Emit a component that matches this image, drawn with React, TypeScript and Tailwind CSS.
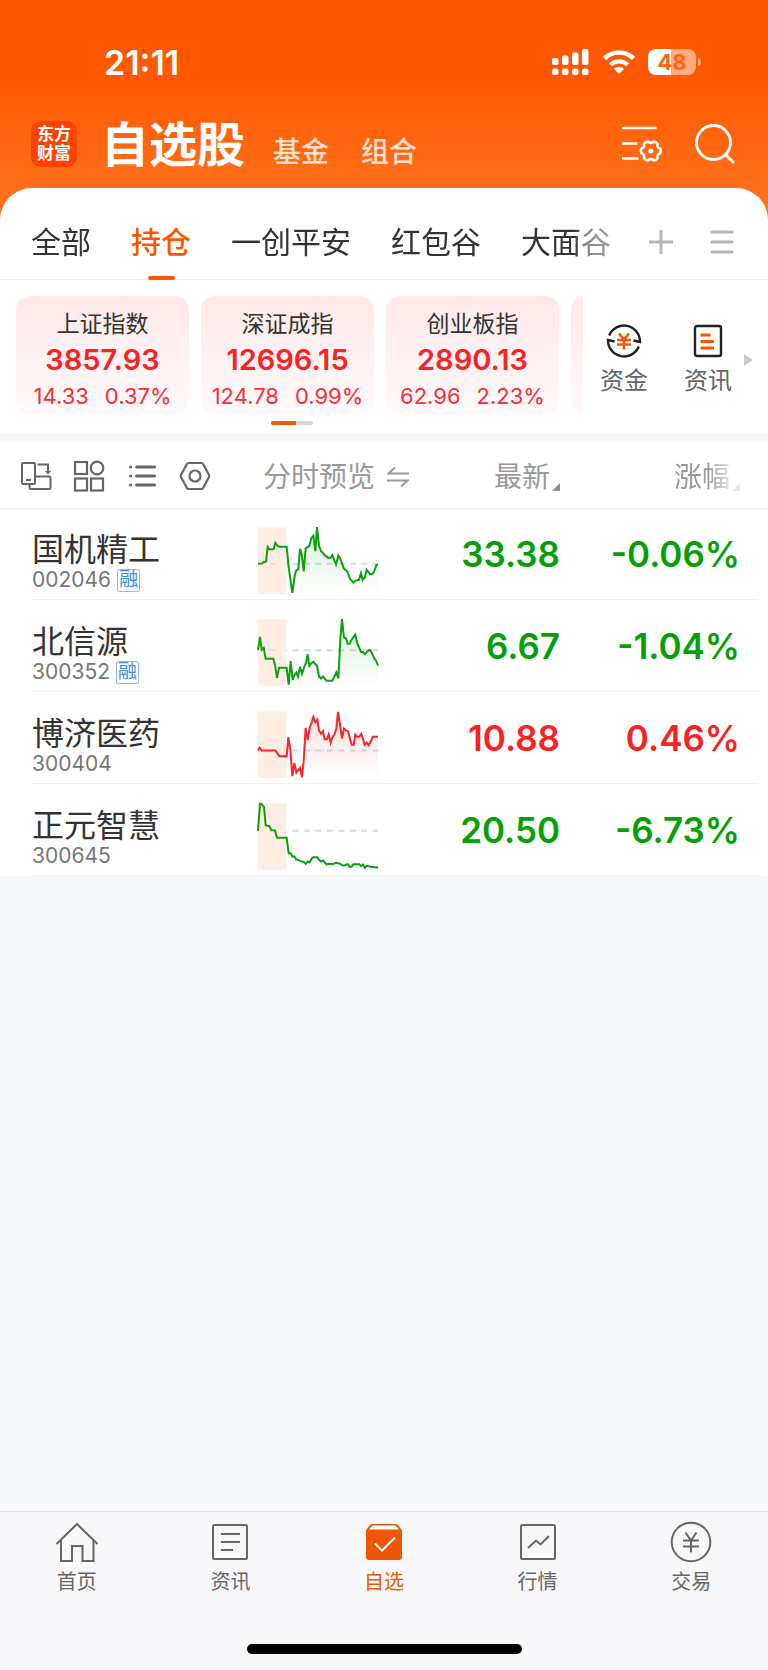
import React, { useState } from 'react';
import clsx from 'clsx';

const tabs = ['全部', '持仓', '一创平安', '红包谷', '大面谷'];

const indexes = [
  { name: '上证指数', value: '3857.93', change: '14.33', percent: '0.37%' },
  { name: '深证成指', value: '12696.15', change: '124.78', percent: '0.99%' },
  { name: '创业板指', value: '2890.13', change: '62.96', percent: '2.23%' },
];

// points are drawn on a 360x200 canvas, base is the previous close
const stocks = [
  {
    name: '国机精工', code: '002046', margin: true, price: '33.38', percent: '-0.06%', up: false, base: 110,
    points: '0,110 12,109 16,105 24,103 29,60 33,66 47,66 52,47 58,55 64,59 86,59 92,120 103,197 110,145 115,130 121,126 126,65 131,80 137,132 143,63 149,60 154,56 160,33 166,26 172,72 177,0 183,55 189,72 194,76 200,84 211,92 218,91 223,84 234,112 241,85 247,95 257,123 268,133 276,155 286,166 292,161 303,158 309,138 314,158 321,150 326,128 336,141 344,140 349,132 355,114 360,113',
  },
  {
    name: '北信源', code: '300352', margin: true, price: '6.67', percent: '-1.04%', up: false, base: 93,
    points: '0,93 6,53 11,92 17,86 23,119 46,119 51,138 57,176 63,146 86,146 92,197 98,126 104,182 109,168 115,160 120,172 126,143 132,164 138,145 144,130 149,105 154,140 160,132 166,128 177,140 183,172 189,178 195,172 206,185 223,185 235,160 241,178 247,60 252,0 258,55 264,57 269,74 275,74 281,61 292,47 298,73 309,98 315,99 321,105 332,93 338,94 348,116 355,126 360,139',
  },
  {
    name: '博济医药', code: '300404', margin: false, price: '10.88', percent: '0.46%', up: true, base: 118,
    points: '0,118 5,110 11,118 52,118 64,135 86,135 91,78 97,115 103,195 109,155 115,184 126,170 132,198 137,150 143,50 149,87 155,50 161,34 166,17 172,33 178,25 183,58 189,68 195,60 200,84 207,84 212,70 218,94 223,78 229,70 235,52 240,2 246,40 252,82 258,52 264,58 270,60 281,101 287,101 292,70 298,77 304,76 310,68 320,101 326,94 332,102 338,92 344,77 360,77',
  },
  {
    name: '正元智慧', code: '300645', margin: false, price: '20.50', percent: '-6.73%', up: false, base: 83,
    points: '0,83 6,2 10,2 18,11 23,66 34,69 40,81 51,82 57,104 86,104 92,150 98,150 103,160 109,160 115,169 126,173 138,177 143,182 149,175 155,178 161,166 166,162 178,162 183,170 189,175 195,172 206,184 212,182 223,183 235,179 247,182 252,186 258,187 269,183 275,191 281,191 286,183 304,183 309,189 315,184 321,194 326,188 338,191 355,193 360,192',
  },
];

function StatusIcons() {
  return (
    <div className="flex items-center text-white">
      <svg width="38" height="26" viewBox="0 0 38 26" fill="currentColor">
        <rect x="0" y="9" width="6.500" height="7" rx="2" />
        <rect x="10" y="6.500" width="6.500" height="9.500" rx="2" />
        <rect x="20" y="3.500" width="6.500" height="12.500" rx="2" />
        <rect x="30" y="0" width="6.500" height="16" rx="2" />
        <rect x="0" y="19.500" width="6.500" height="6.500" rx="2" />
        <rect x="10" y="19.500" width="6.500" height="6.500" rx="2" />
        <rect x="20" y="19.500" width="6.500" height="6.500" rx="2" />
        <rect x="30" y="19.500" width="6.500" height="6.500" rx="2" />
      </svg>
      <svg className="ml-3" width="34" height="26" viewBox="0 0 34 26" fill="none" stroke="currentColor" strokeWidth="4.600">
        <path d="M2.500 9.500a20.500 20.500 0 0 1 29 0" />
        <path d="M8.300 15.800a12.500 12.500 0 0 1 17.400 0" strokeWidth="4.200" />
        <path d="M17 25l-5.200-5.200a7.500 7.500 0 0 1 10.400 0z" fill="currentColor" stroke="none" />
      </svg>
      <div className="ml-3 flex h-[26px] w-12 items-center justify-center rounded-[8px] bg-[linear-gradient(90deg,#fff_48%,#ffab80_48%)] font-[Inter] text-[22px] font-bold text-[#ff6410]">
        48
      </div>
      <svg className="ml-0.5" width="3" height="8" viewBox="0 0 3 8">
        <path d="M0 0c4 1 4 7 0 8z" fill="#ffab80" />
      </svg>
    </div>
  );
}

function Sparkline({ id, points, base, up }: { id: string; points: string; base: number; up: boolean }) {
  const color = up ? '#f8252a' : '#0aa00f';
  return (
    <svg width="120" height="67" viewBox="0 0 360 200" className="overflow-visible">
      <defs>
        <linearGradient id={`fill-${id}`} x1="0" y1="0" x2="0" y2="1">
          <stop offset="0" stopColor={color} stopOpacity="0.16" />
          <stop offset="1" stopColor={color} stopOpacity="0" />
        </linearGradient>
        <clipPath id={`clip-${id}`}>
          <rect x="84" y="0" width="276" height="200" />
        </clipPath>
      </defs>
      <line x1="0" y1={base} x2="360" y2={base} stroke="#d9d9e3" strokeWidth="6" strokeDasharray="18 16.400" />
      <rect width="84" height="200" fill="#ffede4" />
      <line x1="34" y1={base} x2="52" y2={base} stroke="#e6d9da" strokeWidth="5" />
      <polygon points={`0,200 ${points} 360,200`} fill={`url(#fill-${id})`} clipPath={`url(#clip-${id})`} />
      <polyline points={points} fill="none" stroke={color} strokeWidth="6" strokeLinejoin="miter" />
    </svg>
  );
}

const navItems = [
  {
    label: '首页',
    icon: (
      <g>
        <path d="M1.500 23L22 3l20.500 20" />
        <path d="M6 19.500V40h11V25h10.500v15h11V19.500" />
      </g>
    ),
  },
  {
    label: '资讯',
    icon: (
      <g>
        <rect x="5" y="4" width="34" height="34" rx="1.500" />
        <path d="M13 13h19M13 21h19M13 29h12" />
      </g>
    ),
  },
  {
    label: '自选',
    icon: (
      <g>
        <path d="M4 9l5-6h26l5 6v27a3 3 0 0 1-3 3H7a3 3 0 0 1-3-3z" fill="#ee5706" stroke="none" />
        <path d="M10.500 4.500h23l3.500 4H7z" fill="#fff" stroke="none" />
        <path d="M13 22.500l7 7 13-13" stroke="#fff" />
      </g>
    ),
  },
  {
    label: '行情',
    icon: (
      <g>
        <rect x="5" y="4" width="34" height="34" rx="1.500" />
        <path d="M12 27l8-7.500 4.500 4L33 15" />
      </g>
    ),
  },
  {
    label: '交易',
    icon: (
      <g>
        <circle cx="22" cy="21" r="19.300" />
        <path d="M16.500 11.500l5.500 8 5.500-8M14 19.500h16M14 25.500h16M22 19.500v12" />
      </g>
    ),
  },
];

function App() {
  const [tab, setTab] = useState('持仓');
  const [page, setPage] = useState('自选');

  return (
    <div className="flex min-h-screen flex-col bg-[#f7f8fa] font-['Inter','Noto_Sans_CJK_SC',sans-serif] text-[#333]">
      {/* Header */}
      <header className="bg-[linear-gradient(#ff5800_80px,#ff701c_188px)]">
        <div className="flex h-[124px] items-center justify-between pr-[67px] pl-[104px]">
          <span className="text-[34px] font-semibold text-white">21:11</span>
          <StatusIcons />
        </div>
        <div className="-mt-4 flex h-20 items-center pr-8 pl-[31px] text-white">
          <div className="mt-[-8px] grid size-[46px] shrink-0 place-content-center rounded-[10px] bg-[#ff4200] text-center text-[17px] leading-[19px] font-bold">
            <span>东方</span>
            <span>财富</span>
          </div>
          <nav className="ml-6 flex items-baseline leading-[64px]">
            <button className="text-[48px] font-bold">自选股</button>
            <button className="ml-7 text-[28px] font-medium text-white/80">基金</button>
            <button className="ml-8 text-[28px] font-medium text-white/80">组合</button>
          </nav>
          <div className="mt-[-8px] ml-auto flex items-center gap-[31px]">
            <button aria-label="自选设置">
              <svg width="42" height="40" viewBox="0 0 42 40" fill="none" stroke="currentColor" strokeWidth="2.600">
                <path d="M1 4h34.500M1 19.500h15.500M1 34.500h16.500" />
                <path
                  d="M9.500-2.200Q10.600 0 9.500 2.200Q6 3.500 6.700 7.200Q5.300 9.200 2.900 9.400Q0 7-2.900 9.400Q-5.300 9.200-6.700 7.200Q-6 3.500-9.500 2.200Q-10.600 0-9.500-2.200Q-6-3.500-6.700-7.200Q-5.300-9.200-2.900-9.400Q0-7 2.900-9.400Q5.300-9.200 6.700-7.200Q6-3.500 9.500-2.200z"
                  strokeLinejoin="round"
                  transform="translate(29.800 27)"
                />
                <circle cx="29.800" cy="27" r="2.500" fill="currentColor" stroke="none" />
              </svg>
            </button>
            <button aria-label="搜索">
              <svg width="42" height="42" viewBox="0 0 42 42" fill="none" stroke="currentColor" strokeWidth="2.800">
                <circle cx="19.500" cy="19.500" r="17" />
                <path d="M31.500 31.500l8.500 8.500" />
              </svg>
            </button>
          </div>
        </div>
      </header>

      {/* Group tabs */}
      <div className="bg-[#ff701c]">
        <div className="flex h-[92px] rounded-t-[32px] bg-white pr-[34px] pl-[31px] shadow-[inset_0_-1px_0_#ececec]">
          <nav className="flex min-w-0 flex-1 gap-10 overflow-hidden [mask-image:linear-gradient(90deg,#000_calc(100%-38px),#0009_calc(100%-28px),#0007)]">
            {tabs.map(name => (
              <button
                key={name}
                onClick={() => setTab(name)}
                className={clsx(
                  'flex shrink-0 flex-col items-center justify-end text-[30px] leading-10',
                  tab === name ? 'font-medium text-[#ff5500]' : 'text-[#333]'
                )}
              >
                {name}
                <span className={clsx('mt-3.5 h-1 w-[27px] rounded-sm', tab === name && 'bg-[#ff5500]')} />
              </button>
            ))}
          </nav>
          <div className="flex items-center gap-9 pt-4 pl-9 text-[#b5b5b5]">
            <button aria-label="添加分组">
              <svg width="26" height="26" viewBox="0 0 26 26" stroke="currentColor" strokeWidth="3">
                <path d="M13 1v24M1 13h24" />
              </svg>
            </button>
            <button aria-label="管理分组">
              <svg width="24" height="26" viewBox="0 0 24 26" stroke="currentColor" strokeWidth="3" strokeLinecap="round">
                <path d="M2 3h20M2 13h20M2 23h20" />
              </svg>
            </button>
          </div>
        </div>
      </div>

      {/* Market indexes */}
      <section className="flex bg-white pt-4 pb-2">
        <div className="flex min-w-0 flex-1 flex-col items-center">
          <div className="flex w-full gap-3 overflow-hidden pl-4">
            {indexes.map(item => (
              <div
                key={item.name}
                className="flex h-[118px] w-[173px] shrink-0 flex-col items-center rounded-[14px] bg-linear-to-b from-[#fee8e9] to-[#fffafa] pt-3"
              >
                <span className="text-[23px] leading-8">{item.name}</span>
                <span className="mt-1 text-[29px] leading-8 font-semibold text-[#fa2222]">{item.value}</span>
                <span className="mt-1 flex gap-4 text-[22px] leading-8 text-[#fa2f35]">
                  <span>{item.change}</span>
                  <span>{item.percent}</span>
                </span>
              </div>
            ))}
            <div className="h-[118px] w-[173px] shrink-0 rounded-[14px] bg-linear-to-b from-[#fee8e9] to-[#fffafa]" />
          </div>
          <div className="mt-[7px] flex h-1 w-[42px] overflow-hidden rounded-sm bg-[#d5d5de]">
            <div className="w-[25px] bg-[#f25a05]" />
          </div>
        </div>
        <div className="flex w-[185px] items-center pb-0.5 pl-[17px] text-[24px] leading-8 text-[#666]">
          <button className="flex flex-col items-center gap-1.5">
            <svg width="36" height="36" viewBox="0 0 36 36" fill="none" stroke="#222" strokeWidth="2.400">
              <path d="M3.200 12.500A16 16 0 0 1 34 19l-6.500-1.500M32.800 23.500A16 16 0 0 1 2 17l6.500 1.500" />
              <path d="M13 10.500l5 6 5-6M11 17h14M11 21.500h14M18 16v10.500" stroke="#ff5500" strokeWidth="2.600" />
            </svg>
            资金
          </button>
          <button className="ml-9 flex flex-col items-center gap-1.5">
            <svg width="36" height="36" viewBox="0 0 36 36" fill="none" stroke="#222" strokeWidth="2.400">
              <rect x="5" y="3" width="26" height="30" rx="2" />
              <path d="M10.500 12h10M10.500 18.500h13.500M10.500 25h13.500" stroke="#ff5500" strokeWidth="2.800" />
            </svg>
            资讯
          </button>
          <svg className="ml-3" width="9" height="12" viewBox="0 0 9 12">
            <path d="M0 0l9 6-9 6z" fill="#ccc" />
          </svg>
        </div>
      </section>

      {/* Stock list */}
      <main className="grow pt-[9px]">
        <table className="w-full table-fixed bg-white">
          <colgroup>
            <col className="w-[258px]" />
            <col />
            <col className="w-[140px]" />
            <col className="w-[208px]" />
          </colgroup>
          <thead className="text-[28px] leading-8 text-[#999]">
            <tr className="h-[66px] border-b border-[#f0f0f0]">
              <th className="pt-0.5 pl-5 font-normal">
                <div className="flex items-center gap-[21px] text-[#666]">
                  <button aria-label="横屏">
                    <svg width="32" height="32" viewBox="0 0 32 32" fill="none" stroke="currentColor" strokeWidth="2">
                      <rect x="2" y="3" width="13" height="21" rx="1" />
                      <path d="M6 20h5M17.500 4.500H28V13M9.500 24v3.500q0 1.500 1.500 1.500h18q1.500 0 1.500-1.500V18q0-1.500-1.500-1.500H15" />
                      <path d="M25 11h6l-3 3.500z" fill="currentColor" stroke="none" />
                    </svg>
                  </button>
                  <button aria-label="宫格">
                    <svg width="32" height="32" viewBox="0 0 32 32" fill="none" stroke="currentColor" strokeWidth="2.200">
                      <rect x="2" y="2" width="12" height="12" />
                      <circle cx="24" cy="8" r="6.300" />
                      <rect x="2" y="18.500" width="12" height="12" />
                      <rect x="18" y="18.500" width="12" height="12" />
                    </svg>
                  </button>
                  <button aria-label="列表">
                    <svg width="32" height="32" viewBox="0 0 32 32" fill="none" stroke="currentColor" strokeWidth="3" strokeLinecap="round">
                      <path d="M10.500 7h18M10.500 16h18M10.500 25h18M4.500 7h.1M4.500 16h.1M4.500 25h.1" />
                    </svg>
                  </button>
                  <button aria-label="设置">
                    <svg width="32" height="32" viewBox="0 0 32 32" fill="none" stroke="currentColor" strokeWidth="2.200">
                      <path d="M9.500 3h13q1 0 1.600 1l5.900 11q.5 1 0 2l-5.900 11q-.6 1-1.600 1h-13q-1 0-1.600-1L2 17q-.5-1 0-2L7.900 4q.6-1 1.600-1z" />
                      <circle cx="16" cy="16" r="5.500" />
                    </svg>
                  </button>
                </div>
              </th>
              <th className="pt-1 pl-[5px] font-normal">
                <button className="flex items-center gap-3 whitespace-nowrap">
                  分时预览
                  <svg width="22" height="22" viewBox="0 0 22 22" fill="none" stroke="currentColor" strokeWidth="2">
                    <path d="M8 1.500L1.500 7.500H22M14 20.500l6.500-6H0" />
                  </svg>
                </button>
              </th>
              <th className="pt-1 font-normal">
                <button className="ml-auto flex items-end gap-0.5">
                  最新
                  <svg className="mb-0.5" width="8" height="8" viewBox="0 0 8 8">
                    <path d="M8 0v8H0z" fill="#8e8e96" />
                  </svg>
                </button>
              </th>
              <th className="pt-1 pr-7 font-normal">
                <button className="ml-auto flex items-end gap-0.5 [mask-image:linear-gradient(90deg,#000_52%,#0003_88%)]">
                  涨幅
                  <svg className="mb-0.5" width="8" height="8" viewBox="0 0 8 8">
                    <path d="M8 0v8H0z" fill="#8e8e96" />
                  </svg>
                </button>
              </th>
            </tr>
          </thead>
          <tbody>
            {stocks.map(stock => (
              <tr
                key={stock.code}
                className="h-[92px] bg-[linear-gradient(#f1f1f3,#f1f1f3)] bg-[length:calc(100%-41px)_1px] bg-[position:31px_100%] bg-no-repeat"
              >
                <td className="pt-4 pl-8">
                  <div className="text-[32px] leading-9">{stock.name}</div>
                  <div className="flex items-center gap-1.5 text-[21px] leading-6 text-[#777]">
                    {stock.code}
                    {stock.margin && (
                      <span className="grid size-[23px] place-content-center rounded-xs border border-[#8fbdf2] text-[19px] leading-5 text-[#3a8ce8]">
                        融
                      </span>
                    )}
                  </div>
                </td>
                <td className="pt-3">
                  <Sparkline id={stock.code} points={stock.points} base={stock.base} up={stock.up} />
                </td>
                <td className={clsx('text-right text-[35px] font-semibold', stock.up ? 'text-[#fa2222]' : 'text-[#05a005]')}>
                  {stock.price}
                </td>
                <td className={clsx('pr-7 text-right text-[35px] font-semibold', stock.up ? 'text-[#fa2222]' : 'text-[#05a005]')}>
                  {stock.percent}
                </td>
              </tr>
            ))}
          </tbody>
        </table>
      </main>

      {/* Bottom navigation */}
      <footer className="border-t border-[#e3e4e6] bg-[#f8f8fb] pt-[9px]">
        <nav className="grid grid-cols-5">
          {navItems.map(item => (
            <button
              key={item.label}
              onClick={() => setPage(item.label)}
              className={clsx(
                'flex flex-col items-center text-[20px] leading-7',
                page === item.label ? 'text-[#f25a05]' : 'text-[#666]'
              )}
            >
              <svg width="44" height="44" viewBox="0 0 44 44" fill="none" stroke="currentColor" strokeWidth="2">
                {item.icon}
              </svg>
              <span className="mt-[3px]">{item.label}</span>
            </button>
          ))}
        </nav>
        <div className="mx-auto mt-12 mb-4 h-2.5 w-[275px] rounded-full bg-black" />
      </footer>
    </div>
  );
}

export default App;
